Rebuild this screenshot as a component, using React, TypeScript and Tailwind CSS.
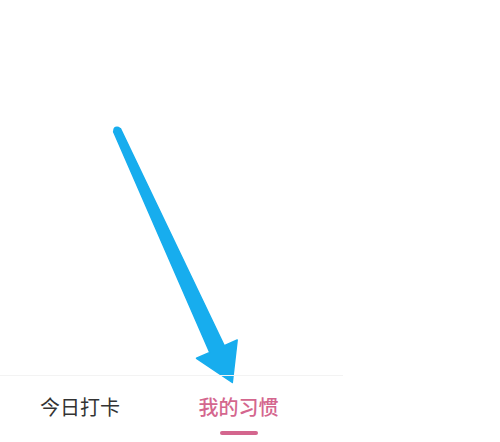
export default function App() {
  return (
    <div className="relative w-[500px] h-[442px] bg-white overflow-hidden" style={{ fontFamily: '"Noto Sans CJK SC", "Noto Sans", sans-serif' }}>
      {/* annotation arrow */}
      <svg className="absolute left-0 top-0" width="500" height="442" viewBox="0 0 500 442">
        <path
          d="M113.6 131.8 L209.8 352.4 L196.5 358.3 L232.3 382.5 L237.2 340 L224.3 345.8 L120.4 128.6 Z"
          fill="#17adee"
          stroke="#17adee"
          strokeWidth="1.5"
          strokeLinejoin="round"
        />
        <circle cx="117" cy="130.2" r="3.8" fill="#17adee" />
      </svg>

      <div className="absolute left-0 top-[375px] w-[343px] h-[67px] border-t border-[#f3f3f3] flex">
        <div className="w-[160px] flex flex-col items-center pt-[17px]">
          <span className="text-[20px] leading-[28px] text-[#333333]">今日打卡</span>
        </div>
        <div className="w-[157px] flex flex-col items-center pt-[17px]">
          <span className="text-[20px] leading-[28px] font-medium text-[#d4668e]">我的习惯</span>
          <div className="mt-[10px] w-[38px] h-[4px] rounded-full bg-[#d4668e]" />
        </div>
      </div>
    </div>
  );
}
